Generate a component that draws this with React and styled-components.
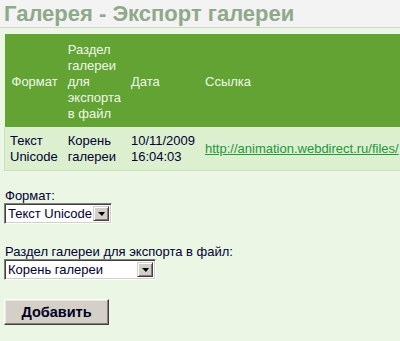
import React from "react";
import styled, { createGlobalStyle } from "styled-components";

const Global = createGlobalStyle`
  html, body {
    margin: 0;
    padding: 0;
    background: #ebf6e4;
    overflow: hidden;
  }
  body {
    font-family: "Liberation Sans", Arial, sans-serif;
    font-size: 13px;
    line-height: 16px;
    color: #000033;
  }
`;

const TopBar = styled.div`
  height: 27px;
  background: #f3f3f3;
  border-bottom: 1px solid #d2d4d0;
`;

const Title = styled.h1`
  margin: 0;
  padding-left: 4px;
  font-size: 22px;
  line-height: 27px;
  font-weight: bold;
  color: #8fa98a;
  white-space: nowrap;
`;

const Content = styled.div`
  padding: 6px 0 0 4px;
`;

const Table = styled.table`
  border-collapse: collapse;
  border-spacing: 0;
`;

const Th = styled.th`
  background: #62a334;
  color: #eef8e6;
  font-weight: normal;
  text-align: left;
  vertical-align: middle;
  padding: 8px 4px 5px 6px;
  &:first-child {
    padding-left: 7px;
  }
`;

const Td = styled.td`
  background: #dcefce;
  color: #000033;
  vertical-align: middle;
  padding: 6px 4px 5px 6px;
  border-bottom: 1px solid #c9dfbd;
  &:first-child {
    border-left: 1px solid #c9dfbd;
    padding-left: 5px;
  }
`;

const Link = styled.a`
  color: #23973c;
  text-decoration: underline;
  white-space: nowrap;
`;

const Form = styled.form`
  padding: 17px 0 0 4px;
  display: flex;
  flex-direction: column;
  align-items: flex-start;
`;

const Field = styled.div`
  display: flex;
  flex-direction: column;
  align-items: flex-start;
  margin-bottom: 20px;
`;

const Label = styled.label`
  display: block;
  padding-left: 1px;
  line-height: 15px;
`;

const SelectFrame = styled.div`
  display: flex;
  box-sizing: border-box;
  width: ${(p) => p.$width}px;
  height: 21px;
  background: #fff;
  border: 1px solid;
  border-color: #808080 #ffffff #ffffff #808080;
  box-shadow: inset 1px 1px #404040, inset -1px -1px #d4d0c8;
  padding: 2px;
`;

const NativeSelect = styled.select`
  flex: 1;
  min-width: 0;
  appearance: none;
  border: none;
  outline: none;
  background: transparent;
  font-family: "Liberation Sans", Arial, sans-serif;
  font-size: 13px;
  color: #000033;
  padding: 0 0 0 1px;
  margin: 0;
  height: 15px;
  line-height: 15px;
`;

const ArrowButton = styled.span`
  display: flex;
  align-items: center;
  justify-content: center;
  box-sizing: border-box;
  width: 16px;
  height: 15px;
  background: #d4d0c8;
  border: 1px solid;
  border-color: #d4d0c8 #404040 #404040 #d4d0c8;
  box-shadow: inset 1px 1px #ffffff, inset -1px -1px #808080;
  pointer-events: none;
  &::after {
    content: "";
    width: 0;
    height: 0;
    border-left: 4px solid transparent;
    border-right: 3px solid transparent;
    border-top: 4px solid #000;
    margin-top: 1px;
  }
`;

const Button = styled.button`
  box-sizing: border-box;
  width: 105px;
  height: 26px;
  margin-top: -1px;
  padding: 0;
  background: #d4d0c8;
  border: 1px solid;
  border-color: #ffffff #404040 #404040 #ffffff;
  box-shadow: inset -1px -1px #808080, inset 1px 1px #e8e6e0;
  font-family: "Liberation Sans", Arial, sans-serif;
  font-size: 14.5px;
  font-weight: bold;
  color: #000022;
  cursor: pointer;
`;

function Select({ width, options }) {
  return (
    <SelectFrame $width={width}>
      <NativeSelect>
        {options.map((o) => (
          <option key={o}>{o}</option>
        ))}
      </NativeSelect>
      <ArrowButton />
    </SelectFrame>
  );
}

export default function App() {
  return (
    <>
      <Global />
      <TopBar>
        <Title>Галерея - Экспорт галереи</Title>
      </TopBar>
      <Content>
        <Table>
          <thead>
            <tr>
              <Th>Формат</Th>
              <Th>Раздел галереи для экспорта в файл</Th>
              <Th>Дата</Th>
              <Th>Ссылка</Th>
            </tr>
          </thead>
          <tbody>
            <tr>
              <Td>Текст Unicode</Td>
              <Td>Корень галереи</Td>
              <Td>10/11/2009 16:04:03</Td>
              <Td>
                <Link href="#">http://animation.webdirect.ru/files/</Link>
              </Td>
            </tr>
          </tbody>
        </Table>
      </Content>
      <Form onSubmit={(e) => e.preventDefault()}>
        <Field>
          <Label>Формат:</Label>
          <Select width={108} options={["Текст Unicode"]} />
        </Field>
        <Field>
          <Label>Раздел галереи для экспорта в файл:</Label>
          <Select width={152} options={["Корень галереи"]} />
        </Field>
        <Button type="submit">Добавить</Button>
      </Form>
    </>
  );
}
